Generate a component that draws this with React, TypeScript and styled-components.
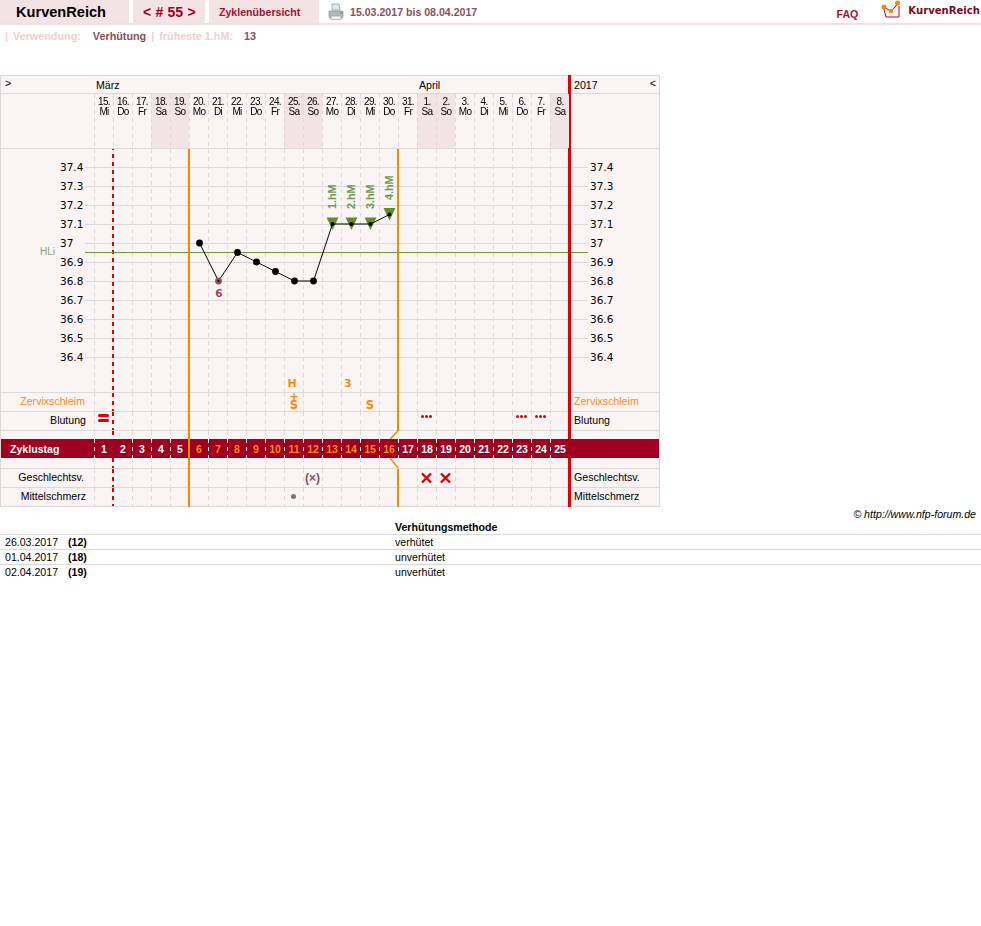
import React from "react";
import styled, { createGlobalStyle, css } from "styled-components";

const GlobalStyle = createGlobalStyle`
  body {
    margin: 0;
    background: #fff;
    color: #000;
    font-family: "Liberation Sans", Arial, sans-serif;
    font-size: 10.6px;
  }
`;

const GRID = "#ddd9d8";
const PANEL = "#faf4f5";
const WEEKEND = "#f3e3e5";
const ORANGE = "#ff8800";
const RED = "#e00000";
const DARK = "#a00020";
const MAUVE = "#8a4f5c";
const GREEN = "#6f9a50";

const TopBar = styled.div`
  display: flex;
  height: 23px;
  border-bottom: 2px solid #f3dfe2;
`;

const Tab = styled.div<{ $w: number }>`
  width: ${(p) => p.$w}px;
  margin-right: 4px;
  background: ${WEEKEND};
  box-sizing: border-box;
  display: flex;
  align-items: center;
`;

const Brand = styled(Tab)`
  padding-left: 16px;
  font-size: 14.6px;
  font-weight: bold;
`;

const Pager = styled(Tab)`
  padding-left: 10px;
  color: ${DARK};
  font-size: 14px;
  font-weight: bold;
  word-spacing: 0.4px;
`;

const Overview = styled(Tab)`
  padding-left: 10px;
  color: #a1142f;
  font-weight: bold;
`;

const PrintIcon = styled.svg`
  margin: 3px 6px 0 5px;
`;

const DateRange = styled.div`
  color: ${MAUVE};
  font-weight: bold;
  line-height: 25px;
`;

const Faq = styled.div`
  margin-left: auto;
  color: #a1142f;
  font-weight: bold;
  line-height: 29px;
`;

const Logo = styled.div`
  display: flex;
  margin: 0 1px 0 23px;
`;

const LogoText = styled.div`
  margin-left: 4px;
  color: #7a0a1f;
  font-family: "DejaVu Sans", sans-serif;
  font-size: 10.1px;
  font-weight: bold;
  line-height: 21px;
`;

const InfoBar = styled.div`
  display: flex;
  height: 50px;
  padding: 5px 0 0 5px;
  box-sizing: border-box;
  font-size: 10.8px;
  font-weight: bold;
  color: #f5cdd0;
`;

const InfoValue = styled.span<{ $gap: number }>`
  margin: 0 5px 0 ${(p) => p.$gap}px;
  color: ${MAUVE};
`;

const InfoLabel = styled.span`
  margin-left: 5px;
`;

const Chart = styled.div`
  width: 660px;
  box-sizing: border-box;
  background: ${PANEL};
  border: 1px solid ${GRID};
  border-bottom: 0;
`;

const Row = styled.div<{ $h: number; $flat?: boolean; $bar?: boolean }>`
  display: grid;
  grid-template-columns: 93px repeat(25, 19px) 1fr;
  height: ${(p) => p.$h}px;
  box-sizing: border-box;
  border-bottom: ${(p) => (p.$flat ? "0" : `1px solid ${GRID}`)};
  ${(p) =>
    p.$bar &&
    css`
      background: ${DARK};
      color: #fff;
      font-weight: bold;
    `}
`;

type Line = "dash" | "white" | "orange" | "reddash" | "none";

const dashes = (c: string, w: number) => css`
  content: "";
  position: absolute;
  top: 0;
  bottom: 0;
  left: ${w > 1 ? -1 : 0}px;
  width: ${w}px;
  background: repeating-linear-gradient(to bottom, ${c} 0 4px, transparent 4px 8px);
`;

const Cell = styled.div<{ $line: Line; $bg?: string }>`
  position: relative;
  display: flex;
  flex-direction: column;
  align-items: center;
  background: ${(p) => p.$bg || "transparent"};
  &::before {
    ${(p) => p.$line === "dash" && dashes(GRID, 1)}
    ${(p) => p.$line === "white" && dashes("#fff", 1)}
    ${(p) => p.$line === "reddash" && dashes(RED, 2)}
    ${(p) =>
      p.$line === "orange" &&
      css`
        content: "";
        position: absolute;
        top: 0;
        bottom: -1px;
        left: -1px;
        width: 2px;
        background: ${ORANGE};
      `}
  }
`;

const MonthCell = styled.div<{ $span: number }>`
  grid-column: span ${(p) => p.$span};
  padding: 2px 0 0 2px;
  line-height: 14px;
`;

const Corner = styled.div`
  padding: 0 0 0 4px;
  line-height: 15px;
`;

const RightCell = styled.div<{ $bare?: boolean; $top?: boolean; $end?: boolean }>`
  display: flex;
  justify-content: space-between;
  margin: ${(p) => (p.$top ? "-1px" : "0")} 0 ${(p) => (p.$end ? "0" : "-1px")} -1px;
  padding: ${(p) => (p.$top ? "2px" : "0")} 0 0 3px;
  border-left: 3px solid ${(p) => (p.$bare ? "transparent" : RED)};
  line-height: 16px;
`;

const OrangeLabel = styled.span`
  color: #ff8a1e;
`;

const CloseMark = styled.span`
  margin-right: 3px;
  line-height: 13px;
`;

const DayLabel = styled.div`
  padding: 3px 0 0 1px;
  font-size: 10px;
  line-height: 10px;
  letter-spacing: -0.7px;
  text-align: center;
  transform: translateZ(0);
`;

const Plot = styled.div`
  height: 244px;
  svg {
    display: block;
  }
`;

const RowLabel = styled.div<{ $color?: string; $pad: number }>`
  padding-right: ${(p) => p.$pad}px;
  color: ${(p) => p.$color || "#000"};
  line-height: 16px;
  text-align: right;
`;

const BarLabel = styled.div`
  padding-left: 9px;
  line-height: 20px;
`;

const DayNumber = styled.span<{ $hot: boolean }>`
  padding-left: 1px;
  color: ${(p) => (p.$hot ? ORANGE : "#fff")};
  font-size: 10.5px;
  line-height: 20px;
`;

const Slime = styled.span`
  padding-left: 1px;
  color: ${ORANGE};
  font-family: "DejaVu Sans", sans-serif;
  font-size: 11.5px;
  font-weight: bold;
  line-height: 8px;
  text-align: center;
  white-space: pre-line;
`;

const BleedPills = styled.div`
  display: flex;
  flex-direction: column;
  gap: 2px;
  margin-top: 2px;
  i {
    display: block;
    width: 11px;
    height: 3px;
    border-radius: 2px;
    background: ${RED};
  }
`;

const Spotting = styled.div`
  display: flex;
  gap: 1px;
  margin-top: 3px;
  i {
    display: block;
    width: 3px;
    height: 3px;
    border-radius: 50%;
    background: ${RED};
  }
`;

const Protected = styled.span`
  color: ${MAUVE};
  font-size: 12px;
  font-weight: bold;
  line-height: 18px;
`;

const Pain = styled.i`
  display: block;
  width: 5px;
  height: 5px;
  margin-top: 6px;
  border-radius: 50%;
  background: #777;
`;

const Bend = styled.svg`
  position: absolute;
  right: -1px;
  top: 0;
`;

const Credit = styled.div`
  padding-right: 5px;
  font-style: italic;
  line-height: 14px;
  text-align: right;
`;

const Table = styled.div`
  display: grid;
  grid-template-columns: 395px 1fr;
  line-height: 14px;
`;

const TableHead = styled.div`
  font-weight: bold;
  line-height: 13px;
`;

const TableCell = styled.div`
  height: 15px;
  box-sizing: border-box;
  border-top: 1px solid ${GRID};
  line-height: 15px;
`;

const FirstCell = styled(TableCell)`
  display: flex;
  padding-left: 5px;
  b {
    margin-left: 10px;
  }
`;

const days = [
  "15.|Mi", "16.|Do", "17.|Fr", "18.|Sa", "19.|So", "20.|Mo", "21.|Di", "22.|Mi", "23.|Do",
  "24.|Fr", "25.|Sa", "26.|So", "27.|Mo", "28.|Di", "29.|Mi", "30.|Do", "31.|Fr", "1.|Sa",
  "2.|So", "3.|Mo", "4.|Di", "5.|Mi", "6.|Do", "7.|Fr", "8.|Sa",
];
const weekend = [3, 4, 10, 11, 17, 18, 24];
const scale = [37.4, 37.3, 37.2, 37.1, 37, 36.9, 36.8, 36.7, 36.6, 36.5, 36.4];
const temps: [number, number][] = [
  [5, 37], [6, 36.8], [7, 36.95], [8, 36.9], [9, 36.85], [10, 36.8], [11, 36.8],
  [12, 37.1], [13, 37.1], [14, 37.1], [15, 37.15],
];

const colX = (i: number) => 94 + i * 19 + 10.5;
const tempY = (t: number) => 167 + (37.4 - t) * 190;

const lineFor = (i: number, open = true): Line => {
  if (i === 1) return "reddash";
  if (i === 5) return "orange";
  if (i === 16 && open) return "orange";
  return "dash";
};

type Marks = Record<number, React.ReactNode>;

const DayCells = ({ marks = {}, open = true }: { marks?: Marks; open?: boolean }) => (
  <>
    {days.map((d, i) => (
      <Cell key={d} $line={lineFor(i, open)}>
        {marks[i]}
      </Cell>
    ))}
  </>
);

const Dots = () => (
  <Spotting>
    <i />
    <i />
    <i />
  </Spotting>
);

const Cross = () => (
  <svg width="11" height="18" viewBox="0 0 11 18">
    <path d="M1 4.5l9 9M10 4.5l-9 9" stroke={RED} strokeWidth="2.4" />
  </svg>
);

const chartFont = { fontFamily: "'DejaVu Sans', sans-serif", fontSize: 10.5 };

const TempPlot = () => (
  <svg width="658" height="244" viewBox="1 149 658 244">
    <line x1="1" x2="659" y1="392.5" y2="392.5" stroke={GRID} />
    {scale.map((t) => (
      <g key={t}>
        <line x1="85" x2="588" y1={tempY(t) + 0.5} y2={tempY(t) + 0.5} stroke={GRID} />
        <text x="60" y={tempY(t) + 4} {...chartFont}>{t}</text>
        <text x="590" y={tempY(t) + 4} {...chartFont}>{t}</text>
      </g>
    ))}
    {days.map((d, i) => (
      <line key={d} x1={94.5 + i * 19} x2={94.5 + i * 19} y1="149" y2="392" stroke={GRID} strokeDasharray="4 4" />
    ))}
    <line x1="113" x2="113" y1="149" y2="392" stroke={RED} strokeWidth="2" strokeDasharray="4 4" strokeDashoffset="3" />
    <line x1="189" x2="189" y1="149" y2="393" stroke={ORANGE} strokeWidth="2" />
    <line x1="398" x2="398" y1="149" y2="393" stroke={ORANGE} strokeWidth="2" />
    <line x1="85" x2="588" y1="252.5" y2="252.5" stroke="#6f9a30" />
    <line x1="569.5" x2="569.5" y1="149" y2="393" stroke={RED} strokeWidth="3" />
    <text x="40" y="255" fontSize="10" fill="#8aa070">HLi</text>
    {temps.slice(7).map(([i, t]) => (
      <polygon
        key={i}
        points={`${colX(i) - 6},${tempY(t) - 6.5} ${colX(i) + 6},${tempY(t) - 6.5} ${colX(i)},${tempY(t) + 6}`}
        fill="#5f8f25"
      />
    ))}
    <polyline points={temps.map(([i, t]) => `${colX(i)},${tempY(t)}`).join(" ")} fill="none" stroke="#000" />
    {temps.map(([i, t], n) => (
      <circle key={i} cx={colX(i)} cy={tempY(t)} r={n > 6 ? 2 : 3.4} fill={n === 1 ? MAUVE : "#000"} />
    ))}
    <circle cx={colX(6)} cy={tempY(36.8)} r="1" fill="#000" />
    <text x="219" y="297" textAnchor="middle" fontSize="10.5" fontWeight="bold" fontFamily="'DejaVu Sans', sans-serif" fill={MAUVE}>6</text>
    {["1.hM", "2.hM", "3.hM", "4.hM"].map((label, n) => {
      const x = colX(12 + n) + 3.5;
      const y = n === 3 ? 200 : 209;
      return (
        <text key={label} x={x} y={y} transform={`rotate(-90 ${x} ${y})`} fontSize="10.8" fontWeight="bold" fill={GREEN}>
          {label}
        </text>
      );
    })}
    <text x="292" y="387" textAnchor="middle" fontSize="11" fontWeight="bold" fontFamily="'DejaVu Sans', sans-serif" fill={ORANGE}>H</text>
    <text x="348" y="387" textAnchor="middle" fontSize="10.5" fontWeight="bold" fontFamily="'DejaVu Sans', sans-serif" fill={ORANGE}>3</text>
  </svg>
);

const App = () => (
  <>
    <GlobalStyle />
    <TopBar>
      <Brand $w={129}>KurvenReich</Brand>
      <Pager $w={72}>{"< # 55 >"}</Pager>
      <Overview $w={110}>Zyklenübersicht</Overview>
      <PrintIcon width="16" height="18" viewBox="0 0 16 18">
        <path d="M4 1h7l1 6H4z" fill="#dfe6f0" stroke="#8a97a8" strokeWidth="0.7" />
        <path d="M1 8h14v5.5l-1 1.5H2l-1-1.5z" fill="#b4b8bc" stroke="#85898e" strokeWidth="0.7" />
        <path d="M3 13h10v3.5H3z" fill="#eef0f2" stroke="#9a9ea3" strokeWidth="0.6" />
        <circle cx="13" cy="10" r="0.9" fill="#6a8f5a" />
      </PrintIcon>
      <DateRange>15.03.2017 bis 08.04.2017</DateRange>
      <Faq>FAQ</Faq>
      <Logo>
        <svg width="23" height="20" viewBox="0 0 23 20">
          <path d="M3 9l2 8h13V6" fill="#fdf3f4" stroke="#a01040" strokeWidth="1" />
          <path d="M3 7l7 4.500 7-8" fill="none" stroke="#a01040" strokeWidth="1" />
          <circle cx="3" cy="7" r="2.500" fill="#f08a10" />
          <circle cx="10" cy="11" r="2.200" fill="#f08a10" />
          <circle cx="16.500" cy="3" r="2.500" fill="#f08a10" />
        </svg>
        <LogoText>KurvenReich</LogoText>
      </Logo>
    </TopBar>
    <InfoBar>
      | <InfoLabel>Verwendung:</InfoLabel>
      <InfoValue $gap={12}>Verhütung</InfoValue>| <InfoLabel>früheste 1.hM:</InfoLabel>
      <InfoValue $gap={11}>13</InfoValue>
    </InfoBar>
    <Chart>
      <Row $h={18}>
        <Corner>&gt;</Corner>
        <MonthCell $span={17}>März</MonthCell>
        <MonthCell $span={8}>April</MonthCell>
        <RightCell $top>
          2017<CloseMark>&lt;</CloseMark>
        </RightCell>
      </Row>
      <Row $h={55}>
        <div />
        {days.map((d, i) => (
          <Cell key={d} $line="dash" $bg={weekend.includes(i) ? WEEKEND : undefined}>
            <DayLabel>
              {d.split("|")[0]}
              <br />
              {d.split("|")[1]}
            </DayLabel>
          </Cell>
        ))}
        <RightCell />
      </Row>
      <Plot>
        <TempPlot />
      </Plot>
      <Row $h={19}>
        <RowLabel $color="#ff8a1e" $pad={9}>Zervixschleim</RowLabel>
        <DayCells
          marks={{
            10: <Slime>{"+\nS"}</Slime>,
            14: <Slime>{"\nS"}</Slime>,
          }}
        />
        <RightCell>
          <OrangeLabel>Zervixschleim</OrangeLabel>
        </RightCell>
      </Row>
      <Row $h={19}>
        <RowLabel $pad={8}>Blutung</RowLabel>
        <DayCells
          marks={{
            0: (
              <BleedPills>
                <i />
                <i />
              </BleedPills>
            ),
            17: <Dots />,
            22: <Dots />,
            23: <Dots />,
          }}
        />
        <RightCell>Blutung</RightCell>
      </Row>
      <Row $h={8} $flat>
        <div />
        <DayCells
          open={false}
          marks={{
            15: (
              <Bend width="10" height="8" viewBox="0 0 10 8">
                <path d="M9 0L1 8" stroke={ORANGE} strokeWidth="1.5" />
              </Bend>
            ),
          }}
        />
        <RightCell $end />
      </Row>
      <Row $h={19} $flat $bar>
        <BarLabel>Zyklustag</BarLabel>
        {days.map((d, i) => (
          <Cell key={d} $line={i === 5 ? "orange" : i === 1 ? "none" : "white"}>
            <DayNumber $hot={i >= 5 && i <= 15}>{i + 1}</DayNumber>
          </Cell>
        ))}
        <RightCell $bare $end />
      </Row>
      <Row $h={11}>
        <div />
        <DayCells
          open={false}
          marks={{
            15: (
              <Bend width="10" height="10" viewBox="0 0 10 10">
                <path d="M1 0L9 10" stroke={ORANGE} strokeWidth="1.500" />
              </Bend>
            ),
          }}
        />
        <RightCell />
      </Row>
      <Row $h={19}>
        <RowLabel $pad={10}>Geschlechtsv.</RowLabel>
        <DayCells marks={{ 11: <Protected>(×)</Protected>, 17: <Cross />, 18: <Cross /> }} />
        <RightCell>Geschlechtsv.</RightCell>
      </Row>
      <Row $h={19}>
        <RowLabel $pad={8}>Mittelschmerz</RowLabel>
        <DayCells marks={{ 10: <Pain /> }} />
        <RightCell>Mittelschmerz</RightCell>
      </Row>
    </Chart>
    <Credit>© http://www.nfp-forum.de</Credit>
    <Table>
      <div />
      <TableHead>Verhütungsmethode</TableHead>
      <FirstCell>
        26.03.2017 <b>(12)</b>
      </FirstCell>
      <TableCell>verhütet</TableCell>
      <FirstCell>
        01.04.2017 <b>(18)</b>
      </FirstCell>
      <TableCell>unverhütet</TableCell>
      <FirstCell>
        02.04.2017 <b>(19)</b>
      </FirstCell>
      <TableCell>unverhütet</TableCell>
    </Table>
  </>
);

export default App;
